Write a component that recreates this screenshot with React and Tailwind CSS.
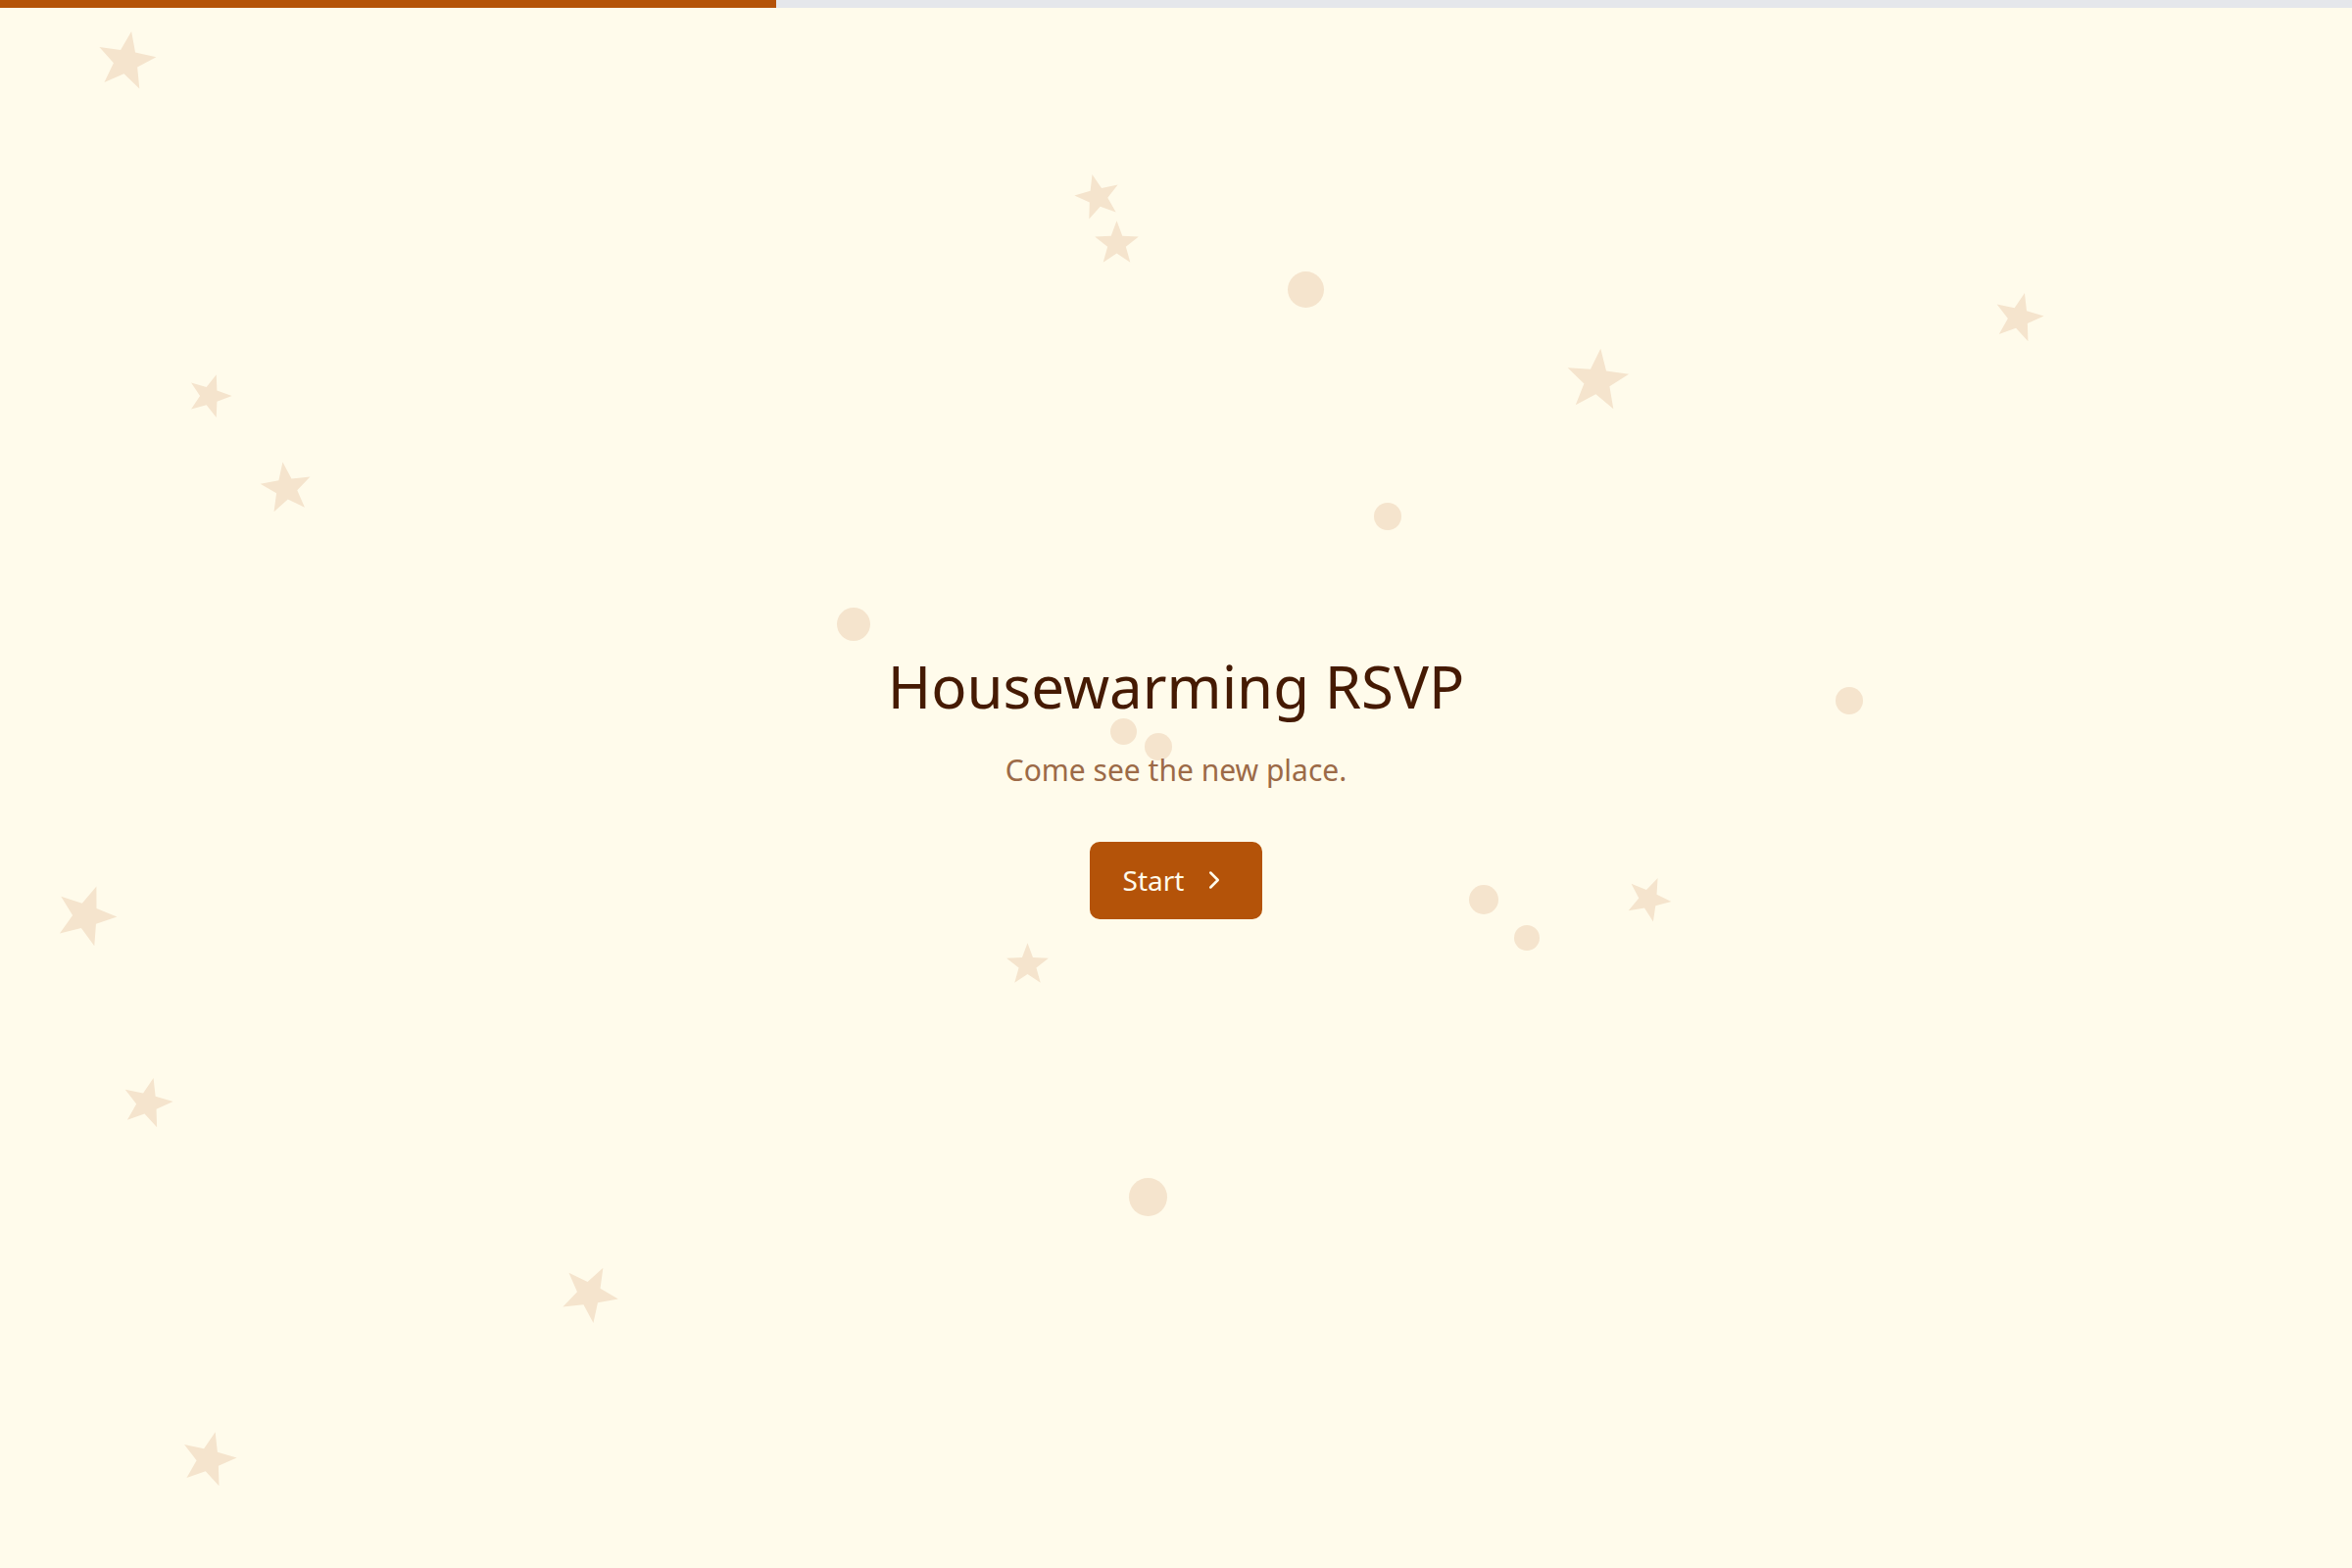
import { ChevronRight } from 'lucide-react'

const STARS = [
  { x: 129, y: 61, s: 62, r: 10 },
  { x: 1120, y: 200, s: 48, r: -14 },
  { x: 1139, y: 247, s: 47, r: 0 },
  { x: 214, y: 403, s: 46, r: 18 },
  { x: 292, y: 497, s: 54, r: -8 },
  { x: 1630, y: 387, s: 66, r: 6 },
  { x: 2060, y: 323, s: 52, r: 14 },
  { x: 88, y: 933, s: 64, r: 20 },
  { x: 1682, y: 916, s: 47, r: 24 },
  { x: 1048, y: 983, s: 45, r: 0 },
  { x: 150, y: 1124, s: 53, r: 14 },
  { x: 602, y: 1319, s: 60, r: 28 },
  { x: 213, y: 1488, s: 58, r: 14 },
]

const DOTS = [
  { x: 1332, y: 295, d: 37 },
  { x: 1416, y: 527, d: 28 },
  { x: 871, y: 637, d: 34 },
  { x: 1146, y: 746, d: 27 },
  { x: 1182, y: 762, d: 28 },
  { x: 1887, y: 715, d: 28 },
  { x: 1514, y: 918, d: 30 },
  { x: 1558, y: 957, d: 26 },
  { x: 1171, y: 1221, d: 39 },
]

function Star({ x, y, s, r }) {
  return (
    <svg
      viewBox="0 0 24 24"
      className="absolute"
      style={{ left: x - s / 2, top: y - s / 2, width: s, height: s, transform: `rotate(${r}deg)` }}
    >
      <polygon
        fill="#f5e4cd"
        points="12,0.6 14.94,8.55 23.41,8.89 16.76,14.15 19.05,22.31 12,17.6 4.95,22.31 7.24,14.15 0.59,8.89 9.06,8.55"
      />
    </svg>
  )
}

export default function App() {
  return (
    <div className="relative min-h-screen flex flex-col bg-[#fffbeb] overflow-hidden" style={{ fontFamily: '"Noto Sans", "Open Sans", sans-serif' }}>
      <div className="h-2 w-full bg-[#e5e7eb] relative z-10">
        <div className="h-full bg-[#b45309]" style={{ width: '33%' }} />
      </div>

      <div className="absolute inset-0 pointer-events-none">
        {STARS.map((st, i) => <Star key={i} {...st} />)}
        {DOTS.map((d, i) => (
          <div
            key={i}
            className="absolute rounded-full bg-[#f5e4cd]"
            style={{ left: d.x - d.d / 2, top: d.y - d.d / 2, width: d.d, height: d.d }}
          />
        ))}
      </div>

      <div className="relative flex-1 flex flex-col items-center justify-center text-center pb-[7px]">
        <h1 className="text-[60px] leading-[72px] text-[#451a03] font-normal">Housewarming RSVP</h1>
        <p className="mt-[30px] text-[30px] leading-[40px] text-[#9c6a47]">Come see the new place.</p>
        <button className="mt-[53px] h-[79px] px-[34px] rounded-[10px] bg-[#b45309] text-[#fffbeb] text-[28px] flex items-center gap-[16px]">
          <span>Start</span>
          <ChevronRight size={30} strokeWidth={2} />
        </button>
      </div>
    </div>
  )
}
